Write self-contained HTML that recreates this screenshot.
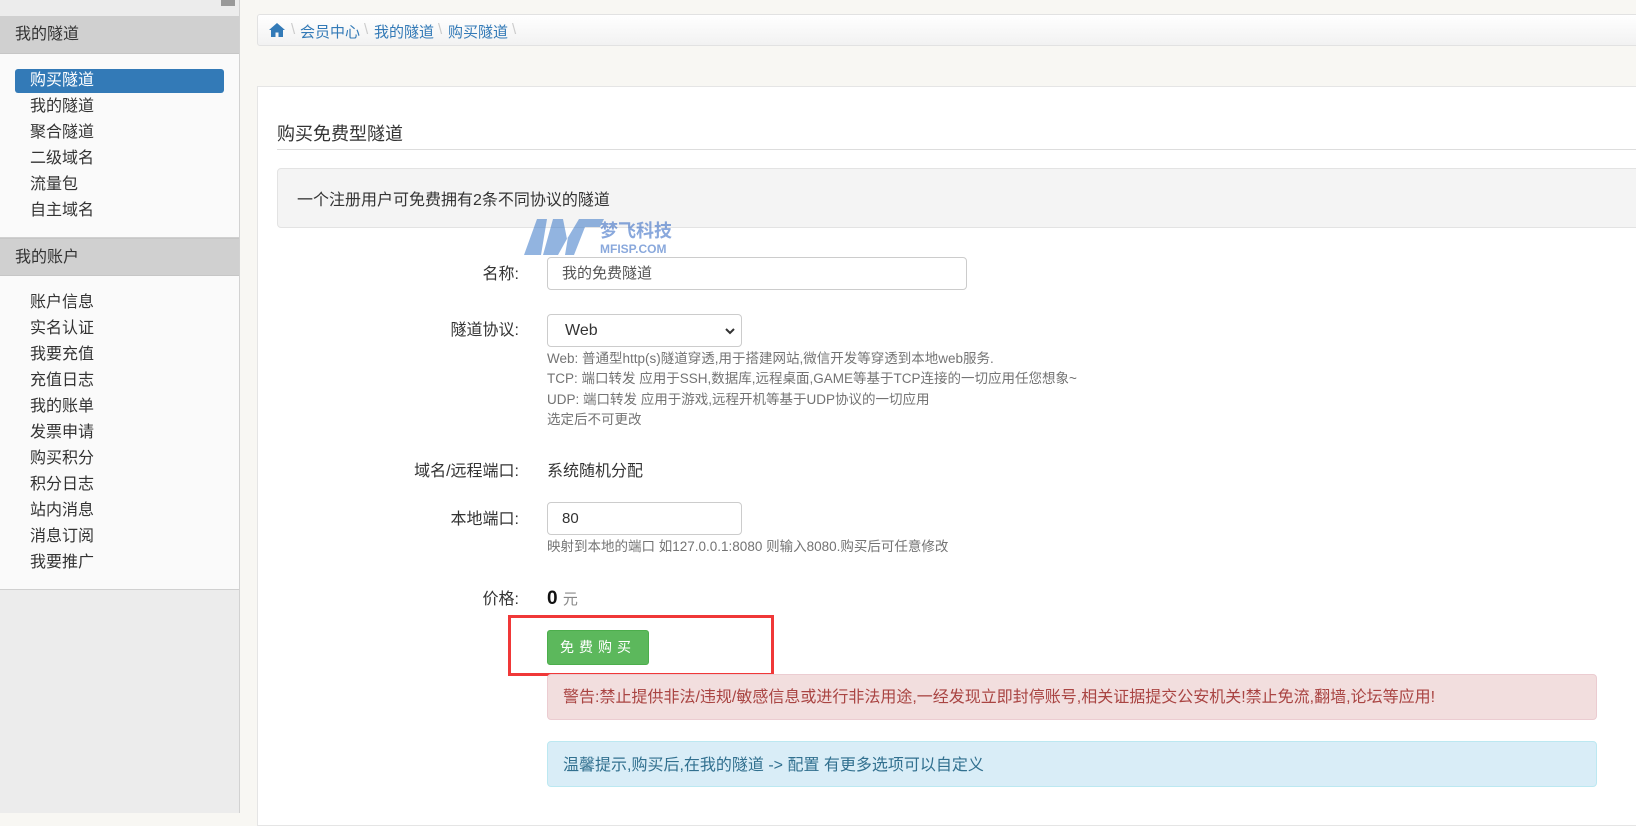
<!DOCTYPE html>
<html><head><meta charset="utf-8"><style>
*{box-sizing:border-box;margin:0;padding:0}
body{width:1636px;height:813px;overflow:hidden;background:#f8f7f3;font-family:"Liberation Sans","Noto Sans CJK SC",sans-serif;color:#333;position:relative}
.side{position:absolute;left:0;top:0;width:240px;height:813px;background:#ececec;border-right:1px solid #d2d2d2}
.hd{position:absolute;left:0;width:239px;background:#d0d0d0;font-size:16px;padding-left:15px;color:#333;border-bottom:1px solid #c6c6c6}
.menu{position:absolute;left:0;width:239px;background:#fafafa;border-bottom:1px solid #d0d0d0}
.it{position:absolute;left:30px;font-size:16px;line-height:20px;color:#333}
.act{position:absolute;left:15px;top:69px;width:209px;height:24px;background:#337ab7;border-radius:3px}
.bc{position:absolute;left:257px;top:14px;width:1400px;height:32px;border:1px solid #e2e2e2;border-radius:3px;background:linear-gradient(#fff,#f2f2f2);font-size:15px;color:#337ab7}
.bc span{position:absolute;top:6px}
.sep{color:#ccc}
.panel{position:absolute;left:257px;top:86px;width:1400px;height:740px;background:#fff;border:1px solid #e5e5e5}
.abs{position:absolute}
.lab{position:absolute;width:260px;left:259px;text-align:right;font-size:16px;line-height:20px;color:#333}
.inp{position:absolute;border:1px solid #ccc;border-radius:4px;background:#fff;font-size:15px;padding-left:14px;color:#555}
.help{position:absolute;left:547px;font-size:13.5px;color:#737373;line-height:20.3px}
</style></head><body>
<div class="side">
<div class="abs" style="left:221px;top:0;width:14px;height:6px;background:#999"></div>
<div class="hd" style="top:16px;height:38px;line-height:37px">我的隧道</div>
<div class="menu" style="top:54px;height:184px"></div>
<div class="act"></div>
<div class="it" style="top:71px;color:#fff">购买隧道</div>
<div class="it" style="top:97px">我的隧道</div>
<div class="it" style="top:123px">聚合隧道</div>
<div class="it" style="top:149px">二级域名</div>
<div class="it" style="top:175px">流量包</div>
<div class="it" style="top:201px">自主域名</div>
<div class="hd" style="top:238px;height:38px;line-height:37px;border-top:1px solid #c6c6c6">我的账户</div>
<div class="menu" style="top:276px;height:314px"></div>
<div class="it" style="top:293px">账户信息</div>
<div class="it" style="top:319px">实名认证</div>
<div class="it" style="top:345px">我要充值</div>
<div class="it" style="top:371px">充值日志</div>
<div class="it" style="top:397px">我的账单</div>
<div class="it" style="top:423px">发票申请</div>
<div class="it" style="top:449px">购买积分</div>
<div class="it" style="top:475px">积分日志</div>
<div class="it" style="top:501px">站内消息</div>
<div class="it" style="top:527px">消息订阅</div>
<div class="it" style="top:553px">我要推广</div>
</div>
<div class="bc">
<svg class="abs" style="left:11px;top:8px" width="16" height="14" viewBox="0 0 16 14"><path d="M8 0L0 7h2v7h4.5V9.5h3V14H14V7h2z" fill="#337ab7"/></svg>
<span class="sep" style="left:33px">\</span>
<span style="left:42px">会员中心</span><span class="sep" style="left:106px">\</span>
<span style="left:116px">我的隧道</span><span class="sep" style="left:180px">\</span>
<span style="left:190px">购买隧道</span><span class="sep" style="left:254px">\</span>
</div>
<div class="panel"></div>
<div class="abs" style="left:277px;top:120px;font-size:18px;color:#333">购买免费型隧道</div>
<div class="abs" style="left:277px;top:149px;width:1370px;height:1px;background:#ddd"></div>
<div class="abs" style="left:277px;top:168px;width:1370px;height:60px;background:#f4f4f4;border:1px solid #e3e3e3;border-radius:4px"></div>
<div class="abs" style="left:297px;top:186px;font-size:16px;color:#333">一个注册用户可免费拥有2条不同协议的隧道</div>
<svg class="abs" style="left:522px;top:215px;opacity:.55" width="155" height="44" viewBox="0 0 155 44"><path d="M2 40L15 4h10l-6 36zM21 40L31 4h10l4 20 12-20h25l-4 8H63L52 40h-9l3-18-10 18z" fill="#3a78c8"/><text x="78" y="22" font-size="18" font-weight="bold" fill="#2a62c0" font-family="Liberation Sans,Noto Sans CJK SC,sans-serif">梦飞科技</text><text x="78" y="38" font-size="12" font-weight="bold" fill="#2a62c0" font-family="Liberation Sans,sans-serif">MFISP.COM</text></svg>
<div class="lab" style="top:265px">名称:</div>
<div class="inp" style="left:547px;top:257px;width:420px;height:33px;line-height:31px">我的免费隧道</div>
<div class="lab" style="top:321px">隧道协议:</div>
<div class="inp" style="left:547px;top:314px;width:195px;height:33px;line-height:31px;color:#333;font-size:16px;padding-left:17px">Web<svg class="abs" style="right:6px;top:13px" width="10" height="7" viewBox="0 0 10 7"><path d="M1 1l4 4 4-4" stroke="#333" stroke-width="2" fill="none"/></svg></div>
<div class="help" style="top:349px">Web: 普通型http(s)隧道穿透,用于搭建网站,微信开发等穿透到本地web服务.<br>TCP: 端口转发 应用于SSH,数据库,远程桌面,GAME等基于TCP连接的一切应用任您想象~<br>UDP: 端口转发 应用于游戏,远程开机等基于UDP协议的一切应用<br>选定后不可更改</div>
<div class="lab" style="top:462px">域名/远程端口:</div>
<div class="abs" style="left:547px;top:462px;font-size:16px;line-height:20px">系统随机分配</div>
<div class="lab" style="top:510px">本地端口:</div>
<div class="inp" style="left:547px;top:502px;width:195px;height:33px;line-height:31px;color:#333">80</div>
<div class="help" style="top:537px">映射到本地的端口 如127.0.0.1:8080 则输入8080.购买后可任意修改</div>
<div class="lab" style="top:590px">价格:</div>
<div class="abs" style="left:547px;top:588px;font-size:19px;font-weight:bold;color:#111">0 <span style="font-size:15px;font-weight:normal;color:#888">元</span></div>
<div class="abs" style="left:508px;top:615px;width:266px;height:61px;border:3px solid #f03838"></div>
<div class="abs" style="left:547px;top:630px;width:102px;height:35px;background:#5cb85c;border:1px solid #4cae4c;border-radius:3px;color:#fff;font-size:14px;text-align:center;line-height:33px;letter-spacing:5px">免费购买</div>
<div class="abs" style="left:547px;top:674px;width:1050px;height:46px;background:#f2dede;border:1px solid #ebccd1;border-radius:4px;color:#a94442;font-size:16px;padding:8px 0 0 15px">警告:禁止提供非法/违规/敏感信息或进行非法用途,一经发现立即封停账号,相关证据提交公安机关!禁止免流,翻墙,论坛等应用!</div>
<div class="abs" style="left:547px;top:741px;width:1050px;height:46px;background:#d9edf7;border:1px solid #bce8f1;border-radius:4px;color:#31708f;font-size:16px;padding:9px 0 0 15px">温馨提示,购买后,在我的隧道 -&gt; 配置 有更多选项可以自定义</div>
</body></html>
